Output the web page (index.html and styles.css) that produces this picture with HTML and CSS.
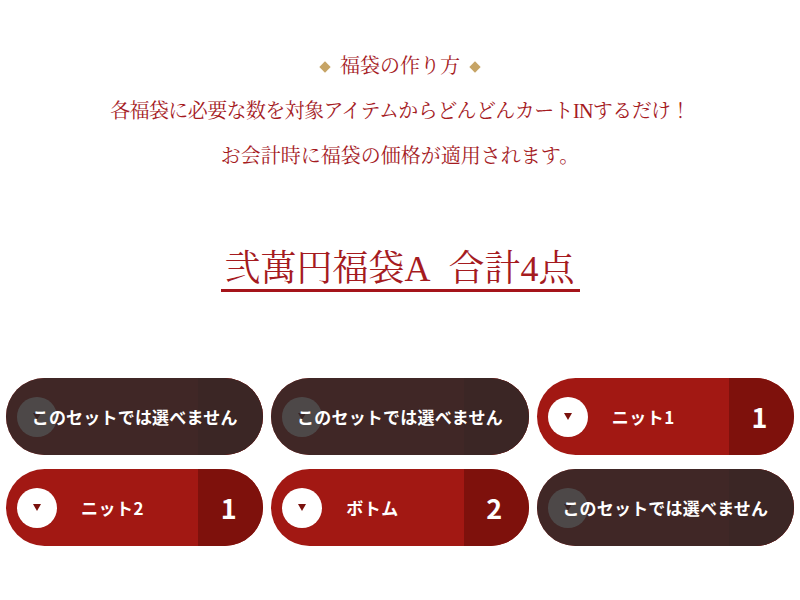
FILE: index.html
```html
<!DOCTYPE html>
<html lang="ja">
<head>
<meta charset="utf-8">
<title>福袋の作り方</title>
<link rel="stylesheet" href="styles.css">
</head>
<body>
<main class="page">
  <section class="howto">
    <p class="howto-head"><span class="diamond"></span>福袋の作り方<span class="diamond"></span></p>
    <p class="howto-line howto-line-tight">各福袋に必要な数を対象アイテムからどんどんカートINするだけ！</p>
    <p class="howto-line">お会計時に福袋の価格が適用されます。</p>
  </section>

  <div class="set-title-wrap">
    <h1 class="set-title">弐萬円福袋A&nbsp; 合計4点</h1>
  </div>

  <ul class="picker">
    <li class="pick is-disabled">
      <span class="pick-toggle"><span class="tri"></span></span>
      <span class="pick-cover">このセットでは選べません</span>
    </li>
    <li class="pick is-disabled">
      <span class="pick-toggle"><span class="tri"></span></span>
      <span class="pick-cover">このセットでは選べません</span>
    </li>
    <li class="pick">
      <span class="pick-toggle"><span class="tri"></span></span>
      <span class="pick-label">ニット1</span>
      <span class="pick-count">1</span>
    </li>
    <li class="pick">
      <span class="pick-toggle"><span class="tri"></span></span>
      <span class="pick-label">ニット2</span>
      <span class="pick-count">1</span>
    </li>
    <li class="pick">
      <span class="pick-toggle"><span class="tri"></span></span>
      <span class="pick-label">ボトム</span>
      <span class="pick-count">2</span>
    </li>
    <li class="pick is-disabled">
      <span class="pick-toggle"><span class="tri"></span></span>
      <span class="pick-cover">このセットでは選べません</span>
    </li>
  </ul>
</main>
</body>
</html>
```

FILE: styles.css
```css
* { box-sizing: border-box; }

html, body {
  margin: 0;
  padding: 0;
  background: #ffffff;
}

.page {
  width: 800px;
  height: 600px;
  overflow: hidden;
}

/* intro copy */
.howto {
  padding-top: 44px;
  text-align: center;
  font-family: "Liberation Serif", "Noto Serif CJK JP", "Noto Sans CJK JP", serif;
  font-size: 20px;
  line-height: 45px;
  color: #a51b1f;
}

.howto p {
  margin: 0;
}

.howto-line-tight {
  letter-spacing: -0.6px;
}

.howto-head {
  display: flex;
  justify-content: center;
  align-items: center;
  gap: 11px;
}

.diamond {
  width: 8px;
  height: 8px;
  background: #c6a466;
  transform: rotate(45deg);
}

/* set title */
.set-title-wrap {
  margin-top: 70px;
  text-align: center;
}

.set-title {
  display: inline-block;
  margin: 0;
  padding: 0 5px 0 4px;
  font-family: "Liberation Serif", "Noto Serif CJK JP", "Noto Sans CJK JP", serif;
  font-weight: normal;
  font-size: 36px;
  line-height: 40px;
  color: #a51b1f;
  border-bottom: 3px solid #a5141a;
}

/* item picker */
.picker {
  list-style: none;
  margin: 86px 0 0;
  padding: 0 6px;
  display: grid;
  grid-template-columns: repeat(3, 1fr);
  column-gap: 8px;
  row-gap: 14px;
}

.pick {
  position: relative;
  height: 77px;
  border-radius: 39px;
  overflow: hidden;
  display: flex;
  align-items: center;
  background: #a21813;
  color: #ffffff;
  font-family: "Noto Sans CJK JP", "Noto Sans", sans-serif;
  font-weight: 700;
}

.pick-toggle {
  flex: none;
  width: 40px;
  height: 40px;
  margin-left: 11px;
  border-radius: 50%;
  background: #ffffff;
  display: flex;
  align-items: center;
  justify-content: center;
}

.tri {
  width: 0;
  height: 0;
  border-left: 4px solid transparent;
  border-right: 4px solid transparent;
  border-top: 7px solid #7a110d;
}

.pick-label {
  flex: 1;
  padding-left: 24px;
  font-size: 17px;
  letter-spacing: 0.5px;
}

.pick-count {
  flex: none;
  width: 65px;
  align-self: stretch;
  display: flex;
  align-items: center;
  justify-content: center;
  padding-right: 4px;
  background: #7e110c;
  font-size: 27px;
}

/* unavailable items are dimmed under a dark cover */
.pick.is-disabled::after {
  content: "";
  position: absolute;
  top: 0;
  right: 0;
  bottom: 0;
  width: 65px;
  background: #7e110c;
}

.pick-cover {
  position: absolute;
  inset: 0;
  z-index: 1;
  display: flex;
  align-items: center;
  justify-content: center;
  background: rgba(48, 42, 42, 0.86);
  font-size: 17px;
  letter-spacing: 0.2px;
  color: #ffffff;
}
```
